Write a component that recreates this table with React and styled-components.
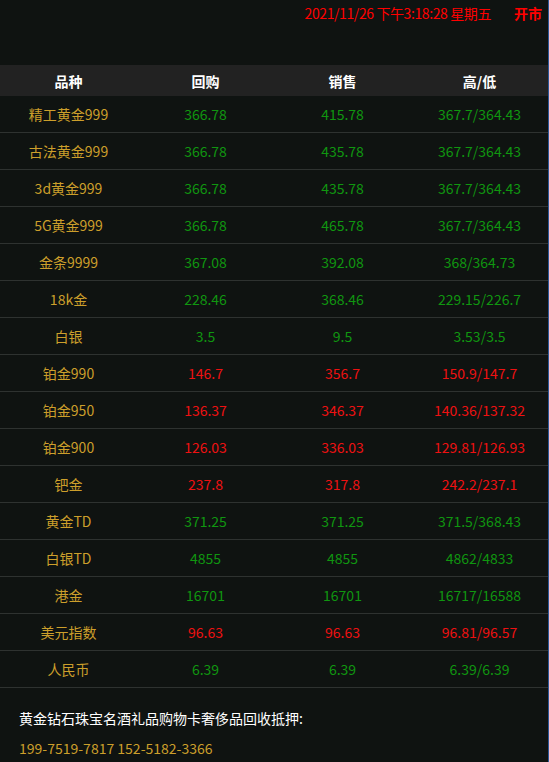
import React from "react";
import styled, { createGlobalStyle } from "styled-components";

const Global = createGlobalStyle`
  html, body {
    margin: 0;
    padding: 0;
    background: #0f1311;
  }
  body {
    font-family: "Noto Sans CJK SC", "Noto Sans", sans-serif;
    font-size: 14px;
  }
`;

const colors = {
  gold: "#cc9f2b",
  green: "#109610",
  red: "#ee1111"
};

const Page = styled.div`
  width: 549px;
  min-height: 762px;
  box-sizing: border-box;
  border-right: 1px solid #2b5797;
  background: #0f1311;
`;

const TopBar = styled.div`
  height: 65px;
  display: flex;
  justify-content: flex-end;
  align-items: flex-start;
  padding: 3px 6px 0 0;
  box-sizing: border-box;
  color: #ff0000;
  font-size: 14px;
  line-height: 20px;
`;

const Stamp = styled.span`
  letter-spacing: -0.4px;
`;

const Status = styled.span`
  font-weight: bold;
  margin-left: 23px;
`;

const Table = styled.div`
  display: flex;
  flex-direction: column;
`;

const Row = styled.div`
  display: grid;
  grid-template-columns: repeat(4, 1fr);
  height: ${p => (p.head ? 31 : 37)}px;
  align-items: center;
  background: ${p => (p.head ? "#222222" : "transparent")};
  border-bottom: ${p => (p.head ? "none" : "1px solid #2e3230")};
  box-sizing: border-box;
`;

const Cell = styled.div`
  text-align: center;
  color: ${p => p.color || "#ffffff"};
  font-weight: ${p => (p.bold ? "bold" : "normal")};
  white-space: nowrap;
`;

const Footer = styled.div`
  padding: 15px 0 0 19px;
  line-height: 30px;
`;

const Notice = styled.div`
  color: #ffffff;
`;

const Phone = styled.div`
  color: ${colors.gold};
`;

const data = [
  ["精工黄金999", "366.78", "415.78", "367.7/364.43", "green"],
  ["古法黄金999", "366.78", "435.78", "367.7/364.43", "green"],
  ["3d黄金999", "366.78", "435.78", "367.7/364.43", "green"],
  ["5G黄金999", "366.78", "465.78", "367.7/364.43", "green"],
  ["金条9999", "367.08", "392.08", "368/364.73", "green"],
  ["18k金", "228.46", "368.46", "229.15/226.7", "green"],
  ["白银", "3.5", "9.5", "3.53/3.5", "green"],
  ["铂金990", "146.7", "356.7", "150.9/147.7", "red"],
  ["铂金950", "136.37", "346.37", "140.36/137.32", "red"],
  ["铂金900", "126.03", "336.03", "129.81/126.93", "red"],
  ["钯金", "237.8", "317.8", "242.2/237.1", "red"],
  ["黄金TD", "371.25", "371.25", "371.5/368.43", "green"],
  ["白银TD", "4855", "4855", "4862/4833", "green"],
  ["港金", "16701", "16701", "16717/16588", "green"],
  ["美元指数", "96.63", "96.63", "96.81/96.57", "red"],
  ["人民币", "6.39", "6.39", "6.39/6.39", "green"]
];

export default function App() {
  return (
    <Page>
      <Global />
      <TopBar>
        <Stamp>2021/11/26 下午3:18:28 星期五</Stamp>
        <Status>开市</Status>
      </TopBar>
      <Table>
        <Row head>
          <Cell bold>品种</Cell>
          <Cell bold>回购</Cell>
          <Cell bold>销售</Cell>
          <Cell bold>高/低</Cell>
        </Row>
        {data.map(([name, buy, sell, hl, tone]) => (
          <Row key={name}>
            <Cell color={colors.gold}>{name}</Cell>
            <Cell color={colors[tone]}>{buy}</Cell>
            <Cell color={colors[tone]}>{sell}</Cell>
            <Cell color={colors[tone]}>{hl}</Cell>
          </Row>
        ))}
      </Table>
      <Footer>
        <Notice>黄金钻石珠宝名酒礼品购物卡奢侈品回收抵押:</Notice>
        <Phone>199-7519-7817 152-5182-3366</Phone>
      </Footer>
    </Page>
  );
}
